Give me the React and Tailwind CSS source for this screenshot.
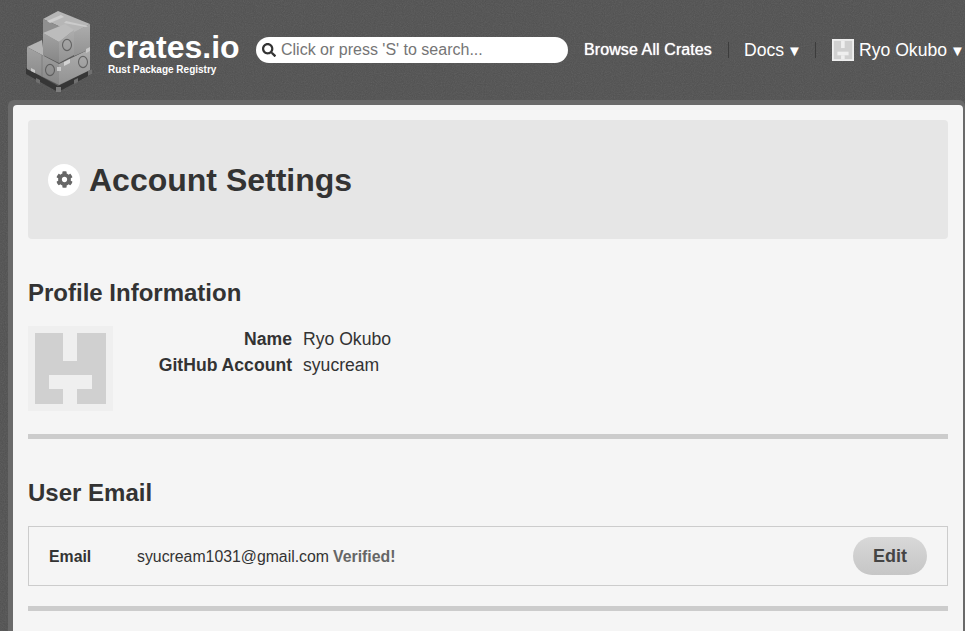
import { FaCog, FaSearch } from 'react-icons/fa';

const Identicon = ({ className }) => (
  <svg viewBox="0 0 85 85" className={className}>
    <rect width="85" height="85" fill="#efefef" />
    <rect x="7" y="7" width="71" height="71" fill="#d0d0d0" />
    <rect x="35" y="7" width="14" height="28" fill="#efefef" />
    <rect x="21" y="49" width="43" height="14" fill="#efefef" />
    <rect x="35" y="63" width="14" height="15" fill="#efefef" />
  </svg>
);

const Noise = () => (
  <svg className="absolute inset-0 w-full h-full opacity-[0.14]" aria-hidden="true">
    <filter id="grain">
      <feTurbulence type="fractalNoise" baseFrequency="0.9" numOctaves="2" stitchTiles="stitch" />
      <feColorMatrix type="saturate" values="0" />
    </filter>
    <rect width="100%" height="100%" filter="url(#grain)" />
  </svg>
);

const RustMark = ({ x, y }) => (
  <g opacity="0.75">
    <ellipse cx={x} cy={y} rx="4.5" ry="5.6" fill="none" stroke="#4f4f4f" strokeWidth="1.1" />
    <path d={`M${x - 1.6} ${y + 2.8}v-5.6h2.4a1.3 1.3 0 0 1 0 2.8h-2.4m2.4 0l1 2.8`} fill="none" stroke="#4f4f4f" strokeWidth="0.8" />
  </g>
);

const Logo = () => (
  <svg viewBox="20 4 76 88" className="w-[76px] h-[88px] shrink-0">
    <defs>
      <linearGradient id="boxLeft" x1="0" y1="0" x2="0" y2="1">
        <stop offset="0" stopColor="#a2a2a2" />
        <stop offset="1" stopColor="#868686" />
      </linearGradient>
      <linearGradient id="boxRight" x1="0" y1="0" x2="0" y2="1">
        <stop offset="0" stopColor="#adadad" />
        <stop offset="1" stopColor="#929292" />
      </linearGradient>
    </defs>
    {/* pallet */}
    <polygon points="26,66 58,84 92,67 92,72 58,90 26,72" fill="#363636" />
    <polygon points="36,76 40,78 40,82 36,80" fill="#6f6f6f" />
    <polygon points="56,85 61,85 61,90 56,90" fill="#7d7d7d" />
    <polygon points="74,78 78,76 78,80 74,82" fill="#6f6f6f" />
    <polygon points="88,69 92,67 92,72 88,74" fill="#6f6f6f" />
    {/* bottom tier */}
    <polygon points="27,45 42,38 44,54" fill="#b4b4b4" />
    <polygon points="27,45 59,62 59,83 27,67" fill="url(#boxLeft)" />
    <polygon points="59,62 90,47 90,68 59,83" fill="url(#boxRight)" />
    <line x1="42" y1="53" x2="42" y2="75" stroke="#6f6f6f" strokeWidth="0.6" />
    {/* back top box */}
    <polygon points="43,17 58,9 90,22 74,31" fill="#b6b6b6" />
    <polygon points="43,17 74,31 74,40 43,40" fill="#8f8f8f" />
    <polygon points="74,30 90,22 90,47 74,54" fill="url(#boxRight)" />
    {/* front top box */}
    <polygon points="43,31 65,22 74,28 59,40" fill="#bcbcbc" />
    <polygon points="43,31 59,40 59,61 43,53" fill="url(#boxLeft)" />
    <polygon points="59,40 74,28 74,53 59,61" fill="url(#boxRight)" />
    <RustMark x="67" y="43" />
    <RustMark x="50" y="68" />
    <RustMark x="83" y="60" />
    {/* tape */}
    <polygon points="47,19 61,13 64,15 50,21" fill="#cdcdcd" />
    <polygon points="66,19 88,24 86,25 64,21" fill="#cbcbcb" />
    <polygon points="64,60 70,57 70,61 64,64" fill="#d2d2d2" />
    <polygon points="31,66 35,68 35,71 31,69" fill="#c8c8c8" />
    <polygon points="57,65 61,65 61,69 57,69" fill="#c8c8c8" />
    <polygon points="86,47 90,45 90,49 86,51" fill="#c8c8c8" />
  </svg>
);

const SectionTitle = ({ children }) => (
  <h2 className="text-[24px] leading-[28px] font-bold text-[#333333]">{children}</h2>
);

const Divider = () => <div className="h-[5px] bg-[#cccccc]" />;

const Caret = () => <span className="ml-[3px] text-[15px] leading-[20px]">▼</span>;

const App = () => {
  return (
    <div className="relative w-full h-[631px] overflow-hidden bg-[#505050] font-['Liberation_Sans',sans-serif]">
      <Noise />
      <header className="relative flex items-center h-[100px] pl-[20px] text-white">
        <Logo />
        <div className="ml-[12px] w-[140px] shrink-0 mt-[5px]">
          <div className="text-[32px] leading-[32px] font-bold">crates.io</div>
          <div className="text-[10px] leading-[11px] font-bold mt-[1px]">Rust Package Registry</div>
        </div>
        <div className="ml-[8px] flex items-center w-[312px] h-[26px] pl-[6px] rounded-[13px] bg-white shrink-0">
          <FaSearch className="text-[14px] text-[#333333] shrink-0" />
          <input
            readOnly
            placeholder="Click or press 'S' to search..."
            className="ml-[5px] flex-1 min-w-0 bg-transparent outline-none text-[16px] placeholder:text-[#757575]"
          />
        </div>
        <a className="ml-[16px] w-[128px] shrink-0 text-[16px] tracking-[0.1px] [text-shadow:0_0_1px_#ffffff] whitespace-nowrap">Browse All Crates</a>
        <div className="ml-[16px] w-px h-[16px] shrink-0 bg-[#3c3c3c]" />
        <a className="ml-[15px] w-[56px] shrink-0 text-[17.6px] whitespace-nowrap">
          Docs<Caret />
        </a>
        <div className="ml-[15px] w-px h-[16px] shrink-0 bg-[#3c3c3c]" />
        <Identicon className="ml-[16px] w-[22px] h-[22px] shrink-0" />
        <a className="ml-[5px] w-[106px] shrink-0 text-[17.6px] whitespace-nowrap">
          Ryo Okubo<Caret />
        </a>
      </header>

      <div className="relative ml-[8px] pl-[5px] pr-[2px] pt-[5px] bg-[#6a6a6a] rounded-tl-[6px] rounded-tr-[6px] h-[531px]">
        <main className="h-full bg-[#f5f5f5] rounded-t-[4px] px-[15px] pt-[15px] text-[#333333]">
          <div className="flex items-center h-[119px] pl-[20px] rounded-[4px] bg-[#e6e6e6]">
            <div className="flex items-center justify-center w-[32px] h-[32px] rounded-full bg-white">
              <FaCog className="text-[17px] text-[#666666]" />
            </div>
            <h1 className="ml-[9px] text-[32px] leading-[38px] font-bold">Account Settings</h1>
          </div>

          <div className="mt-[40px]">
            <SectionTitle>Profile Information</SectionTitle>
          </div>
          <div className="flex mt-[19px]">
            <Identicon className="w-[85px] h-[85px] shrink-0" />
            <div className="text-[17.6px] leading-[26px]">
              <div className="flex">
                <span className="w-[179px] text-right font-bold">Name</span>
                <span className="ml-[11px]">Ryo Okubo</span>
              </div>
              <div className="flex">
                <span className="w-[179px] text-right font-bold">GitHub Account</span>
                <span className="ml-[11px]">syucream</span>
              </div>
            </div>
          </div>
          <div className="mt-[23px]">
            <Divider />
          </div>

          <div className="mt-[40px]">
            <SectionTitle>User Email</SectionTitle>
          </div>
          <div className="flex items-center h-[60px] mt-[19px] pl-[20px] pr-[20px] border border-[#cccccc] text-[15.84px]">
            <span className="w-[88px] mt-[2px] font-bold">Email</span>
            <span className="mt-[2px]">syucream1031@gmail.com</span>
            <span className="ml-[4px] mt-[2px] font-bold text-[#666666]">Verified!</span>
            <button className="ml-auto w-[74px] h-[38px] rounded-full bg-linear-to-b from-[#d8d8d8] to-[#c6c6c6] text-[18px] font-bold text-[#444444]">
              Edit
            </button>
          </div>
          <div className="mt-[20px]">
            <Divider />
          </div>
        </main>
      </div>
    </div>
  );
};

export default App;
